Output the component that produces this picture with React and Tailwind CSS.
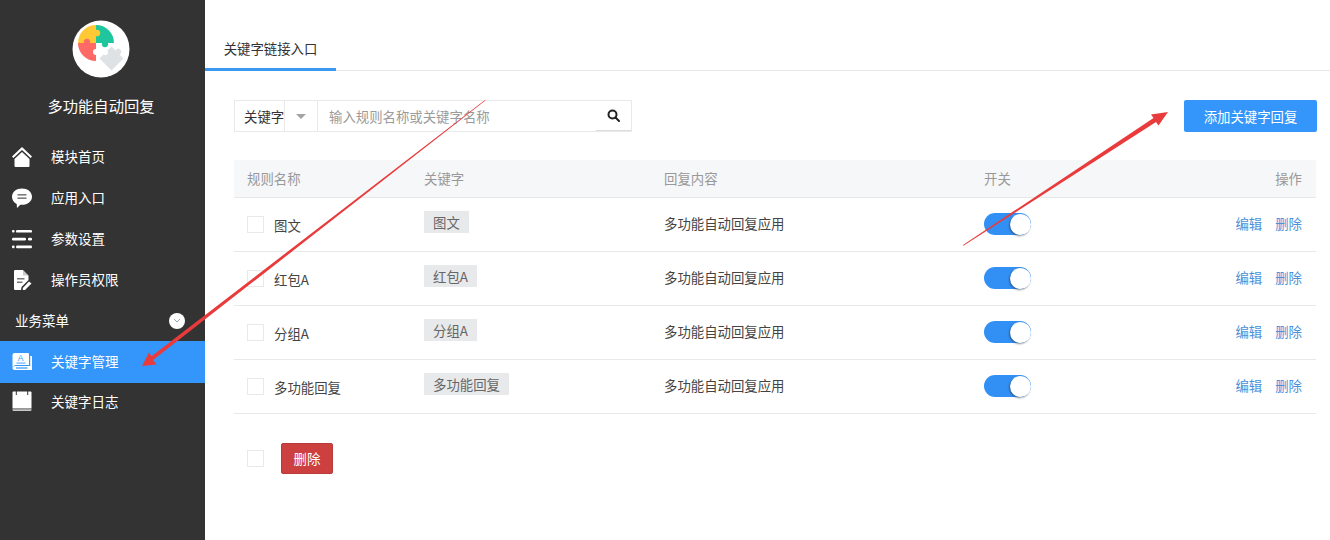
import React from "react";

const HomeIcon = () => (
  <svg width="22" height="22" viewBox="0 0 22 22" fill="#fff">
    <path d="M11 1 L21 10.5 L19.6 12 L11 4 L2.4 12 L1 10.5 Z" />
    <path d="M11 6 L18.5 13 V20 Q18.5 21 17.5 21 H4.5 Q3.5 21 3.5 20 V13 Z" />
  </svg>
);

const ChatIcon = () => (
  <svg width="22" height="22" viewBox="0 0 22 22">
    <path fill="#fff" d="M11 1.5 C16.6 1.5 21 5 21 9.7 C21 14.3 16.6 17.8 11 17.8 L9.3 17.7 L6 21 L5.7 16.9 C2.9 15.5 1 12.8 1 9.7 C1 5 5.4 1.5 11 1.5 Z" />
    <rect x="6.5" y="7" width="9" height="1.6" fill="#7d7d7d" />
    <rect x="6.5" y="10.4" width="9" height="1.6" fill="#7d7d7d" />
  </svg>
);

const ListIcon = () => (
  <svg width="22" height="22" viewBox="0 0 22 22" fill="#fff">
    <rect x="1" y="2" width="2.6" height="2.6" rx="1" />
    <rect x="5" y="2" width="16" height="2.6" rx="1.2" />
    <rect x="1" y="9.8" width="14" height="2.6" rx="1.2" />
    <rect x="17" y="9.8" width="4" height="2.6" rx="1.2" />
    <rect x="1" y="17.6" width="2.6" height="2.6" rx="1" />
    <rect x="5" y="17.6" width="16" height="2.6" rx="1.2" />
  </svg>
);

const DocIcon = () => (
  <svg width="22" height="22" viewBox="0 0 22 22">
    <path fill="#fff" d="M3 2.2 Q3 1 4.2 1 H12 L17.5 6.5 V11 L10.5 18 L10 21 H4.2 Q3 21 3 19.8 Z" />
    <path fill="#333" d="M12 1 V6.5 H17.5 Z" opacity="0.25" />
    <rect x="6" y="9" width="7.5" height="1.5" fill="#777" />
    <rect x="6" y="12.5" width="5.5" height="1.5" fill="#777" />
    <path fill="#fff" d="M18 12.5 L20.5 14.5 L14 21 H11.8 V19 Z" />
  </svg>
);

const BookIcon = () => (
  <svg width="22" height="22" viewBox="0 0 22 22">
    <path fill="#fff" d="M3.5 3 H17 Q18 3 18 4 V15 H5 Q2.5 15 1.5 17.5 V5 Q1.5 3 3.5 3 Z" />
    <path fill="#fff" d="M19.2 6 H21 V20 H4.5 Q1.5 20 1.5 18 Q1.5 16 4.5 16 H19.2 Z" />
    <rect x="5" y="17.4" width="11.5" height="1.2" fill="#3496fb" />
    <text x="6.8" y="11.2" fontSize="8.5" fontFamily="'Liberation Sans', sans-serif" fill="#3496fb">A</text>
    <rect x="5.5" y="12.6" width="9" height="0.9" fill="#3496fb" />
  </svg>
);

const CalendarIcon = () => (
  <svg width="22" height="22" viewBox="0 0 22 22">
    <path fill="#fff" d="M1.5 2.5 Q1.5 1.5 2.5 1.5 H19.5 Q20.5 1.5 20.5 2.5 V18.5 H1.5 Z" />
    <path fill="#c9c9c9" d="M1.5 19.3 H20.5 V20 Q20.5 21 19.5 21 H2.5 Q1.5 21 1.5 20 Z" />
    <rect x="4.8" y="0.5" width="1" height="4.5" fill="#333" />
    <rect x="16.2" y="0.5" width="1" height="4.5" fill="#333" />
  </svg>
);

const PuzzleLogo = () => (
  <svg width="58" height="58" viewBox="0 0 58 58">
    <circle cx="29" cy="29" r="28.5" fill="#fff" />
    <path fill="#1fc59c" d="M24 5 A18 18 0 0 1 42 23 H36 A3.2 3.2 0 1 1 30 23 H24 Z" />
    <path fill="#ffc935" d="M24 5 A18 18 0 0 0 6 23 H24 V16 A3.2 3.2 0 1 0 24 10 Z" />
    <path fill="#ff6a66" d="M6 23 H12 A3.2 3.2 0 1 1 18 23 H24 V29 A3 3 0 1 0 24 35 V41 A18 18 0 0 1 6 23 Z" />
    <g transform="translate(39.5 38.5) rotate(45)" fill="#dfe2e5">
      <rect x="-8.5" y="-8.5" width="17" height="17" />
      <circle cx="0" cy="-9.5" r="3" />
      <circle cx="-8.5" cy="0" r="2.6" fill="#fff" />
    </g>
  </svg>
);

const SearchIcon = () => (
  <svg width="13" height="13" viewBox="0 0 13 13" fill="none" stroke="#222" strokeWidth="2">
    <circle cx="5.5" cy="5.5" r="4" />
    <path d="M8.5 8.5 L12 12" strokeLinecap="round" />
  </svg>
);

const NavItem = ({ icon, label, className }) => (
  <div className={`flex items-center pl-[11px] text-[13.5px] text-white ${className}`}>
    <span className="flex w-[40px] shrink-0">{icon}</span>
    <span>{label}</span>
  </div>
);

const Check = () => <span className="block size-[17px] shrink-0 border border-[#e8e9eb] bg-white" />;

const Toggle = () => (
  <div className="-mt-px flex h-[22px] w-[47px] items-center justify-end rounded-full bg-[#3290f5]">
    <span className="size-[21px] rounded-full bg-white shadow-[-1px_1px_2px_rgba(40,60,90,0.6)]" />
  </div>
);

const rows = [
  { name: "图文", key: "图文" },
  { name: "红包A", key: "红包A" },
  { name: "分组A", key: "分组A" },
  { name: "多功能回复", key: "多功能回复" },
];

const App = () => {
  return (
    <div className="relative flex h-[540px] w-[1330px] overflow-hidden bg-white font-['Noto_Sans_CJK_SC','Liberation_Sans',sans-serif]">
      <aside className="flex w-[205px] shrink-0 flex-col bg-[#333333]">
        <div className="flex flex-col items-center pr-[3px] pt-[20px]">
          <PuzzleLogo />
          <div className="mt-[15px] text-[15.3px] leading-[24px] text-white">多功能自动回复</div>
        </div>
        <nav className="mt-[19px] flex flex-col">
          <NavItem className="h-[41px]" icon={<HomeIcon />} label="模块首页" />
          <NavItem className="h-[41px]" icon={<ChatIcon />} label="应用入口" />
          <NavItem className="h-[41px]" icon={<ListIcon />} label="参数设置" />
          <NavItem className="h-[41px]" icon={<DocIcon />} label="操作员权限" />
          <div className="flex h-[41px] items-center justify-between pl-[15px] pr-[20px] text-[13.5px] text-white">
            <span>业务菜单</span>
            <span className="flex size-[16px] items-center justify-center rounded-full bg-white">
              <svg width="8" height="5" viewBox="0 0 8 5" fill="none" stroke="#9aa3ad" strokeWidth="1">
                <path d="M1 1 L4 4 L7 1" />
              </svg>
            </span>
          </div>
          <NavItem className="h-[42px] bg-[#3496fb] pb-[2px]" icon={<BookIcon />} label="关键字管理" />
          <NavItem className="h-[36px]" icon={<CalendarIcon />} label="关键字日志" />
        </nav>
      </aside>

      <main className="flex min-w-0 flex-1 flex-col">
        <div className="mt-[28px] flex h-[43px] border-b border-[#e7e8ea]">
          <div className="-mb-px flex h-[43px] w-[131px] items-start justify-center border-b-[3px] border-[#3c97ee] pt-[10px] text-[13.4px] leading-[20px] text-[#333]">
            关键字链接入口
          </div>
        </div>

        <div className="mt-[29px] flex items-center justify-between pl-[29px] pr-[13px]">
          <div className="flex h-[32px] w-[398px] items-stretch border border-[#e9e9e9] text-[13.4px]">
            <div className="flex w-[49px] items-center whitespace-nowrap pl-[9px] text-[#333]">关键字</div>
            <div className="flex w-[34px] items-center justify-center border-x border-[#e9e9e9]">
              <span className="h-0 w-0 border-x-[5px] border-t-[5px] border-x-transparent border-t-[#a3a3a3]" />
            </div>
            <div className="flex flex-1 items-center pl-[11px] text-[#9b9b9b]">输入规则名称或关键字名称</div>
            <div className="flex w-[35px] items-center justify-center border-b border-[#dedede]">
              <SearchIcon />
            </div>
          </div>
          <button className="h-[32px] w-[133px] rounded-[2px] bg-[#3496fb] text-[13.4px] text-white">添加关键字回复</button>
        </div>

        <div className="ml-[29px] mr-[14px] mt-[28px] text-[13.4px] text-[#444]">
          <div className="grid h-[38px] grid-cols-[190px_240px_320px_1fr] items-center border-b border-[#e7e8ea] bg-[#f6f7f8] text-[#999]">
            <div className="pl-[13px]">规则名称</div>
            <div>关键字</div>
            <div>回复内容</div>
            <div className="flex justify-between pr-[14px]">
              <span>开关</span>
              <span>操作</span>
            </div>
          </div>
          {rows.map((row) => (
            <div key={row.name} className="grid h-[54px] grid-cols-[190px_240px_320px_1fr] items-center border-b border-[#e7e8ea]">
              <div className="flex items-center gap-[10px] pl-[13px]">
                <Check />
                <span className="mt-[2px]">{row.name}</span>
              </div>
              <div className="flex">
                <span className="-mt-[6px] bg-[#e8e9eb] px-[9px] leading-[22px] text-[#666]">{row.key}</span>
              </div>
              <div className="-mt-[3px]">多功能自动回复应用</div>
              <div className="flex items-center justify-between pr-[14px]">
                <Toggle />
                <span className="-mt-[3px] flex gap-[13px] text-[#4b90d9]">
                  <span>编辑</span>
                  <span>删除</span>
                </span>
              </div>
            </div>
          ))}
          <div className="mt-[29px] flex items-center gap-[17px] pl-[13px]">
            <Check />
            <button className="h-[31px] w-[52px] rounded-[2px] border border-[#b93a3a] bg-[#cd4040] text-[13.4px] text-white">删除</button>
          </div>
        </div>
      </main>

      {/* annotation arrows drawn on top of the screenshot */}
      <svg className="pointer-events-none absolute left-0 top-0" width="1330" height="540" viewBox="0 0 1330 540">
        <polygon fill="#e93b3b" points="485,100 485.4,100.6 153,360 156.5,364.5 142,366 149,352.5 151.5,356.2" />
        <polygon fill="#e93b3b" points="963,245 963.4,245.8 1156,122 1158.5,125.5 1168,112 1151,114.5 1153.5,118" />
      </svg>
    </div>
  );
};

export default App;
